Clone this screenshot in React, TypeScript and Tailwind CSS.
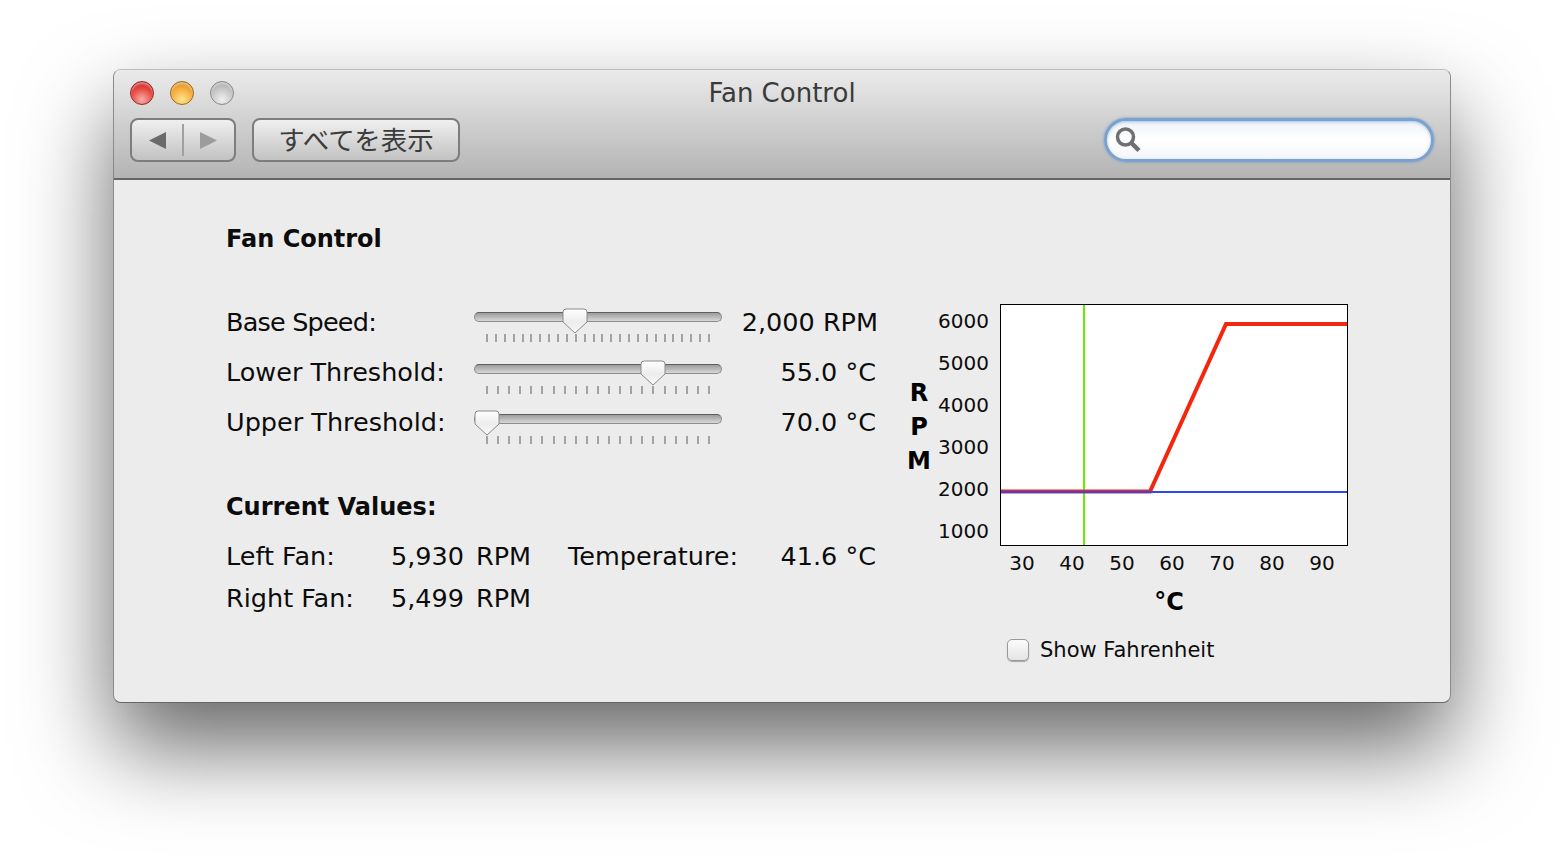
import React from "react";

const sliders = [
  { label: "Base Speed:", value: "2,000 RPM", ticks: 26, thumb: 100, pad: "pt-[14px]", valuePad: "pr-0", labelFit: "tracking-[-0.8px]" },
  { label: "Lower Threshold:", value: "55.0 °C", ticks: 21, thumb: 178, pad: "pt-[16px]", valuePad: "pr-[2px]", labelFit: "" },
  { label: "Upper Threshold:", value: "70.0 °C", ticks: 21, thumb: 12, pad: "pt-[16px]", valuePad: "pr-[2px]", labelFit: "" },
];

const rpmLabels = ["6000", "5000", "4000", "3000", "2000", "1000"];
const tempLabels = ["30", "40", "50", "60", "70", "80", "90"];

function Light({ className }: { className: string }) {
  return <div className={`h-[24px] w-[24px] rounded-full border shadow-[inset_0_2px_2px_rgba(255,255,255,0.45)] ${className}`} />;
}

function Slider({ ticks, thumb, pad }: { ticks: number; thumb: number; pad: string }) {
  return (
    <div className={`w-[248px] ${pad}`}>
      <div className="relative h-[10px] rounded-full border border-[#8c8c8c] border-t-[#5e5e5e] bg-gradient-to-b from-[#9c9c9c] to-[#d8d8d8]">
        <svg
          className="absolute top-[-5px] h-[26px] w-[26px]"
          style={{ left: thumb - 13 }}
          viewBox="0 0 26 26"
        >
          <defs>
            <linearGradient id="thumb-grad" x1="0" y1="0" x2="0" y2="1">
              <stop offset="0%" stopColor="#ffffff" />
              <stop offset="55%" stopColor="#ececec" />
              <stop offset="100%" stopColor="#fafafa" />
            </linearGradient>
          </defs>
          <path
            d="M4 1 H22 Q25 1 25 4 V14 L13 25 L1 14 V4 Q1 1 4 1 Z"
            fill="url(#thumb-grad)"
            stroke="#8a8a8a"
            strokeWidth="1"
          />
        </svg>
      </div>
      <div className="mt-[12px] flex justify-between px-[12px]">
        {Array.from({ length: ticks }).map((_, i) => (
          <div key={i} className="h-[8px] w-[2px] bg-[#a2a2a2]" />
        ))}
      </div>
    </div>
  );
}

export default function App() {
  return (
    <div
      className="h-[860px] overflow-hidden bg-white pl-[113px] pt-[69px] text-[25.5px] text-[#0c0c0c]"
      style={{ fontFamily: '"DejaVu Sans", "Noto Sans CJK JP", sans-serif' }}
    >
      <div className="flex h-[634px] w-[1338px] flex-col overflow-hidden rounded-[8px] border border-[#8a8a8a] border-t-[#bdbdbd] border-b-[#666666] bg-[#ececec] shadow-[0_44px_90px_rgba(0,0,0,0.6)]">
        {/* Title bar */}
        <header className="h-[110px] shrink-0 border-b-2 border-[#666666] bg-gradient-to-b from-[#ebebeb] to-[#b4b4b4] px-[16px]">
          <div className="grid h-[48px] grid-cols-[1fr_auto_1fr] items-center pb-[2px]">
            <div className="flex gap-[16px]">
              <Light className="border-[#8e2a2a] bg-[radial-gradient(circle_at_50%_80%,#f9b0a8,#e64540_55%,#b82020)]" />
              <Light className="border-[#9a6d1a] bg-[radial-gradient(circle_at_50%_80%,#fde48c,#f4ab3c_55%,#c47f1c)]" />
              <Light className="border-[#8a8a8a] bg-[radial-gradient(circle_at_50%_80%,#f0f0f0,#c4c4c4_55%,#9c9c9c)]" />
            </div>
            <div className="text-[26px] leading-[46px] text-[#3a3a3a]">Fan Control</div>
            <div />
          </div>
          <div className="flex items-center justify-between">
            <div className="flex gap-[16px]">
              <div className="flex h-[44px] w-[106px] items-center rounded-[8px] border-2 border-[#7d7d7d] bg-gradient-to-b from-[#f0f0f0] to-[#c2c2c2]">
                <div className="flex w-[50px] justify-end pr-[16px]">
                  <svg width="17" height="17" viewBox="0 0 17 17">
                    <path d="M0 8.5 L17 0 V17 Z" fill="#6a6a6a" />
                  </svg>
                </div>
                <div className="h-[32px] w-[2px] bg-[#a0a0a0]" />
                <div className="pl-[16px]">
                  <svg width="17" height="17" viewBox="0 0 17 17">
                    <path d="M17 8.5 L0 0 V17 Z" fill="#9c9c9c" />
                  </svg>
                </div>
              </div>
              <div className="flex h-[44px] w-[208px] items-center justify-center rounded-[8px] border-2 border-[#7d7d7d] bg-gradient-to-b from-[#f0f0f0] to-[#c2c2c2] pt-[2px] text-[26.5px] text-[#3c3c3c]">
                すべてを表示
              </div>
            </div>
            <div className="flex h-[44px] w-[330px] items-center rounded-full border-[3px] border-[#7aa2cf] bg-gradient-to-b from-[#eef3f9] via-white to-[#f4f6fa] pl-[7px] shadow-[0_0_3px_rgba(90,140,200,0.8),inset_0_1px_3px_rgba(110,150,200,0.5)]">
              <svg width="28" height="28" viewBox="0 0 28 28" fill="none" stroke="#707070">
                <circle cx="11.5" cy="11" r="8" strokeWidth="3.5" />
                <path d="M17.5 17 L25 24.5" strokeWidth="4.5" />
              </svg>
            </div>
          </div>
        </header>

        <main className="flex flex-1 items-start">
          {/* Left column */}
          <div className="w-[764px] pl-[112px] pt-[43px]">
            <h1 className="h-[33px] text-[24px] font-bold leading-[33px]">Fan Control</h1>
            <div className="mt-[42px]">
              {sliders.map((s) => (
                <div key={s.label} className="flex h-[50px] items-start">
                  <div className={`w-[248px] leading-[48px] ${s.labelFit}`}>{s.label}</div>
                  <Slider ticks={s.ticks} thumb={s.thumb} pad={s.pad} />
                  <div className={`flex-1 text-right leading-[48px] ${s.valuePad}`}>{s.value}</div>
                </div>
              ))}
            </div>
            <h2 className="mt-[42px] text-[24px] font-bold leading-[34px]">Current Values:</h2>
            <div className="mt-[15px] flex h-[34px] items-center">
              <div className="w-[165px]">Left Fan:</div>
              <div className="w-[73px] text-right">5,930</div>
              <div className="ml-[12px] w-[52px]">RPM</div>
              <div className="ml-[40px]">Temperature:</div>
              <div className="flex-1 pr-[2px] text-right">41.6 °C</div>
            </div>
            <div className="mt-[8px] flex h-[34px] items-center">
              <div className="w-[165px]">Right Fan:</div>
              <div className="w-[73px] text-right">5,499</div>
              <div className="ml-[12px] w-[52px]">RPM</div>
            </div>
          </div>

          {/* Chart column */}
          <div className="pl-[28px] pt-[124px]">
            <div className="flex">
              <div className="flex h-[242px] w-[26px] flex-col items-center justify-center pt-[4px] text-[24px] font-bold leading-[34px] text-black">
                <span>R</span>
                <span>P</span>
                <span>M</span>
              </div>
              <div className="-mt-[4px] w-[57px] text-right text-[20px] leading-[42px]">
                {rpmLabels.map((l) => (
                  <div key={l} className="h-[42px]">{l}</div>
                ))}
              </div>
              <div className="ml-[11px] h-[242px] w-[348px] border border-black bg-white">
                <svg width="346" height="240" viewBox="1 1 346 240" className="block">
                  <path d="M84 0 V242" stroke="#66ee00" strokeWidth="2" />
                  <path d="M0 187.5 H150 L226 20 H348" stroke="#f4260e" strokeWidth="4" fill="none" />
                  <path d="M0 188 H348" stroke="#2c48f2" strokeWidth="2" />
                </svg>
              </div>
            </div>
            <div className="ml-[91px] flex text-[20px] leading-[22px]">
              {tempLabels.map((l) => (
                <div key={l} className="w-[50px] text-center">{l}</div>
              ))}
            </div>
            <div className="ml-[94px] mt-[11px] w-[348px] pr-[10px] text-center text-[24px] font-bold leading-[34px] text-black">°C</div>
            <div className="ml-[101px] mt-[16px] flex items-center">
              <div className="h-[22px] w-[22px] rounded-[5px] border border-[#9a9a9a] bg-gradient-to-b from-[#fcfcfc] to-[#e4e4e4] shadow-[0_1px_1px_rgba(0,0,0,0.3)]" />
              <span className="ml-[11px] text-[21px] leading-[30px]">Show Fahrenheit</span>
            </div>
          </div>
        </main>
      </div>
    </div>
  );
}
